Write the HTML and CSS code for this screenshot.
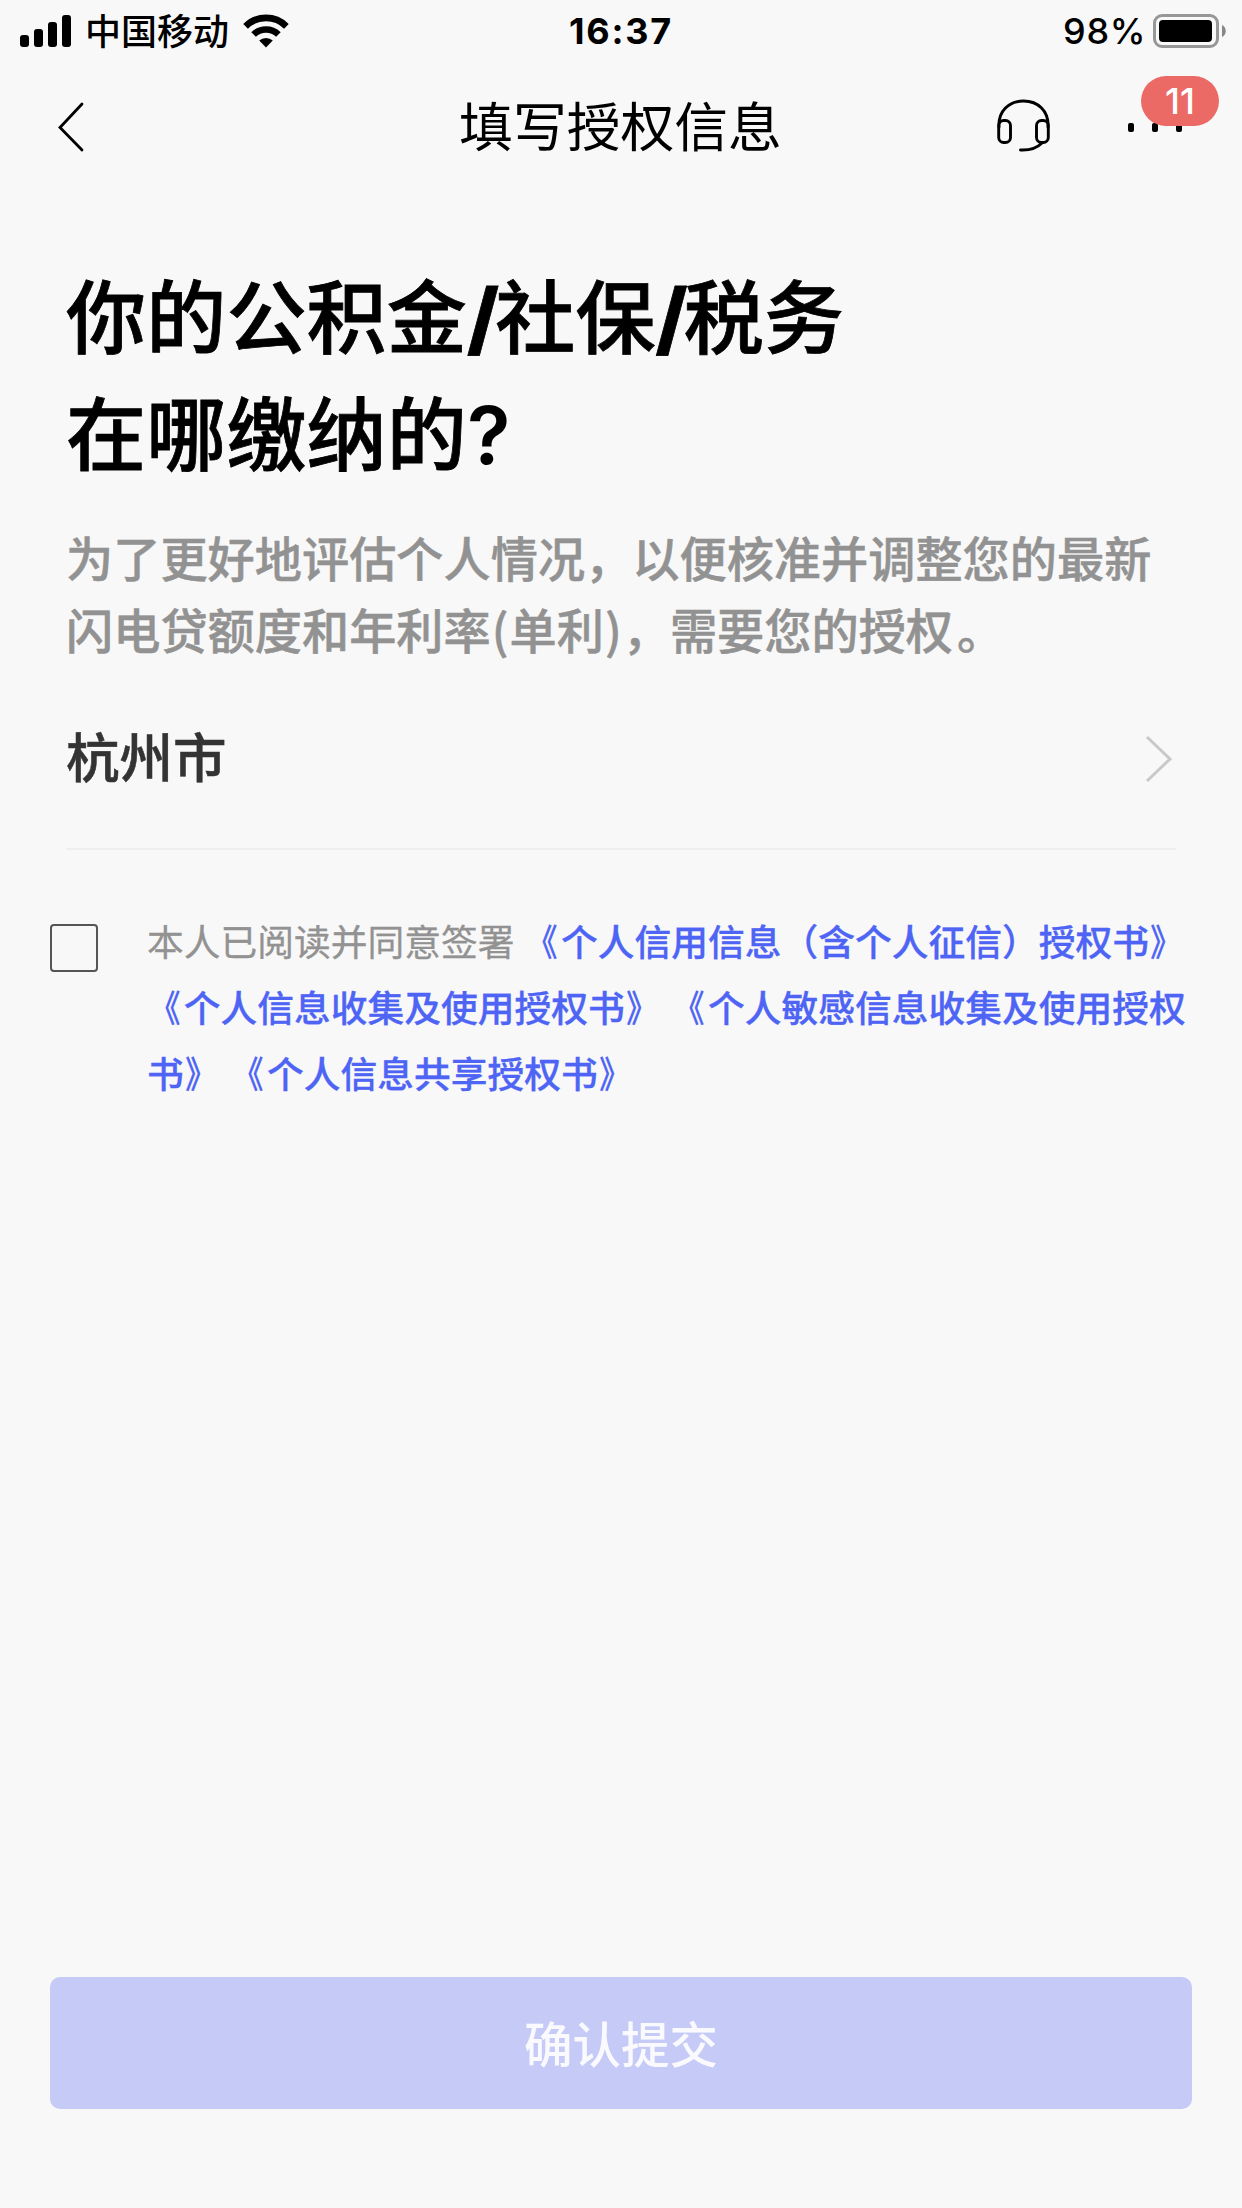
FILE: index.html
```html
<!DOCTYPE html>
<html lang="zh-CN">
<head>
<meta charset="utf-8">
<title>填写授权信息</title>
<link rel="stylesheet" href="styles.css">
</head>
<body>
<div class="screen">
  <div class="status">
    <div class="status-left">
      <svg class="signal" width="51" height="32" viewBox="0 0 51 32"><rect x="0" y="20" width="9" height="12" rx="3"/><rect x="14" y="14" width="9" height="18" rx="3"/><rect x="28" y="7" width="9" height="25" rx="3"/><rect x="42" y="0" width="9" height="32" rx="3"/></svg>
      <span class="carrier">中国移动</span>
      <svg class="wifi" width="46" height="34" viewBox="0 0 46 34"><g fill="none" stroke="#000" stroke-width="6.6"><path d="M2.6 12.3a29 29 0 0 1 40.8 0"/><path d="M10.6 20.5a17.8 17.8 0 0 1 24.8 0"/></g><path d="M16.2 26.6a10 10 0 0 1 13.6 0L23 33.6z"/></svg>
    </div>
    <span class="clock">16:37</span>
    <div class="status-right">
      <span class="percent">98%</span>
      <svg class="battery" width="74" height="34" viewBox="0 0 74 34"><rect x="1.5" y="1.5" width="63" height="31" rx="7.5" fill="none" stroke="#979797" stroke-width="3"/><rect x="6" y="6" width="53" height="22" rx="4"/><path d="M69 11c5 2 5 10 0 12z" fill="#888"/></svg>
    </div>
  </div>
  <header class="nav">
    <svg class="back" width="28" height="52" viewBox="0 0 28 52"><path d="M26 4 4 27.500l22 22.500" fill="none" stroke="#000" stroke-width="2.800" stroke-linecap="round"/></svg>
    <h1 class="nav-title">填写授权信息</h1>
    <div class="nav-actions">
      <svg class="headset" width="54" height="54" viewBox="0 0 54 54"><g fill="none" stroke="#000" stroke-width="2.900" stroke-linecap="round"><path d="M2 28C1 12 12 2 26.500 2S52 12 51 28"/><rect x="1.700" y="21.500" width="11.800" height="22" rx="5"/><rect x="39.500" y="21.500" width="11.800" height="22" rx="5"/><path d="M45 44c-5 5-12 7.500-21.500 7"/></g></svg>
      <div class="more">
        <i></i><i></i><i></i>
        <span class="badge">11</span>
      </div>
    </div>
  </header>
  <main class="content">
    <h2 class="question">你的公积金<span class="slash">/</span>社保<span class="slash">/</span>税务<br>在哪缴纳的<span class="mark">?</span></h2>
    <p class="intro">为了更好地评估个人情况，以便核准并调整您的最新<br>闪电贷额度和年利率<span class="paren">(</span>单利<span class="paren">)</span>，需要您的授权<span class="stop">。</span></p>
    <div class="city">
      <span>杭州市</span>
      <svg width="28" height="50" viewBox="0 0 28 50"><path d="M2 3l23 22L2 47" fill="none" stroke="#c9c9c9" stroke-width="3"/></svg>
    </div>
  </main>
  <div class="agree">
    <span class="checkbox"></span>
    <p class="agree-text">本人已阅读并同意签署 <a><b class="open">《</b>个人信用信息（含个人征信）授权书<b class="close">》</b></a><br><a><b class="open">《</b>个人信息收集及使用授权书<b class="close">》</b></a> <a><b class="open">《</b>个人敏感信息收集及使用授权<br>书<b class="close">》</b></a> <a><b class="open">《</b>个人信息共享授权书<b class="close">》</b></a></p>
  </div>
  <button class="submit">确认提交</button>
</div>
</body>
</html>
```
FILE: styles.css
```css
* { box-sizing: border-box; }
body { margin: 0; background: #f8f8f8; }
.screen {
  width: 1242px;
  height: 2208px;
  display: flex;
  flex-direction: column;
  background: #f8f8f8;
  color: #000;
  font-family: "Noto Sans CJK SC", sans-serif;
  overflow: hidden;
}
h1, h2, p { margin: 0; }
svg { display: block; flex: none; }
.status {
  height: 60px;
  padding: 0 15px 0 20px;
  display: grid;
  grid-template-columns: 1fr auto 1fr;
  align-items: center;
}
.status-left, .status-right { display: flex; align-items: center; }
.status-right { justify-content: flex-end; }
.carrier { margin: -5px 0 0 14px; font-size: 36px; line-height: 60px; font-weight: 500; }
.wifi { margin-left: 14px; }
.clock { margin-right: 5px; font: 700 36px/62px Inter, sans-serif; letter-spacing: 1.8px; }
.percent { font: 500 36px/62px Inter, sans-serif; letter-spacing: 0.6px; margin-right: 7px; }
.nav {
  height: 132px;
  padding: 0 60px 0 56px;
  display: grid;
  grid-template-columns: 1fr auto 1fr;
  align-items: center;
}
.nav-title { margin-top: -5px; padding-left: 3px; font-size: 53.8px; line-height: 80px; font-weight: 400; }
.nav-actions { display: flex; justify-content: flex-end; align-items: center; gap: 77px; }
.more { position: relative; display: flex; gap: 18px; margin-top: 3px; }
.more i { width: 6px; height: 9px; border-radius: 2px; background: #000; }
.badge {
  position: absolute;
  left: 13px;
  top: -47px;
  width: 78px;
  height: 50px;
  border-radius: 25px;
  background: #eb6a66;
  color: #fff;
  font: 500 36px/50px Inter, sans-serif;
  text-align: center;
}
.content { padding: 62px 66px 0; }
.question { font-size: 80px; line-height: 117px; font-weight: 500; letter-spacing: 0.2px; -webkit-text-stroke: 0.8px; }
.slash, .mark { font-family: Inter, sans-serif; line-height: 1; }
.slash { font-weight: 800; margin-right: -4px; }
.mark { font-weight: 600; -webkit-text-stroke: 0; }
.intro { margin-top: 33px; font-size: 47.2px; line-height: 72px; font-weight: 500; color: #929292; white-space: nowrap; -webkit-text-stroke: 0.5px; }
.paren { margin: 0 1px; }
.stop { margin-left: 4px; }
.city {
  height: 185px;
  padding: 5px 3px 0 0;
  border-bottom: 2px solid #eee;
  display: flex;
  align-items: center;
  justify-content: space-between;
  font-size: 53.5px;
  font-weight: 500;
  color: #333;
  -webkit-text-stroke: 0.5px;
}
.city span { margin-top: -9px; }
.agree { padding: 60px 40px 0 50px; display: flex; gap: 49px; }
.checkbox { flex: none; width: 48px; height: 48px; margin-top: 14px; border: 2px solid #555; border-radius: 4px; }
.agree-text { margin-top: -3px; font-size: 36.75px; line-height: 66px; color: #929292; word-spacing: 1.500px; white-space: nowrap; -webkit-text-stroke: 0.3px; }
.agree-text a { color: #4e64f5; font-weight: 500; }
.open, .close { display: inline-block; font-weight: 500; }
.open { transform: translateX(-3px) scaleX(0.85); transform-origin: 95% 50%; }
.close { transform: translateX(1px) scaleX(0.85); transform-origin: 5% 50%; }
.submit {
  margin: auto 50px 99px;
  height: 132px;
  padding: 0 0 1px;
  border: 0;
  border-radius: 10px;
  background: #c5caf7;
  color: #fafafe;
  font: 500 48.5px/131px "Noto Sans CJK SC", sans-serif;
}
```
